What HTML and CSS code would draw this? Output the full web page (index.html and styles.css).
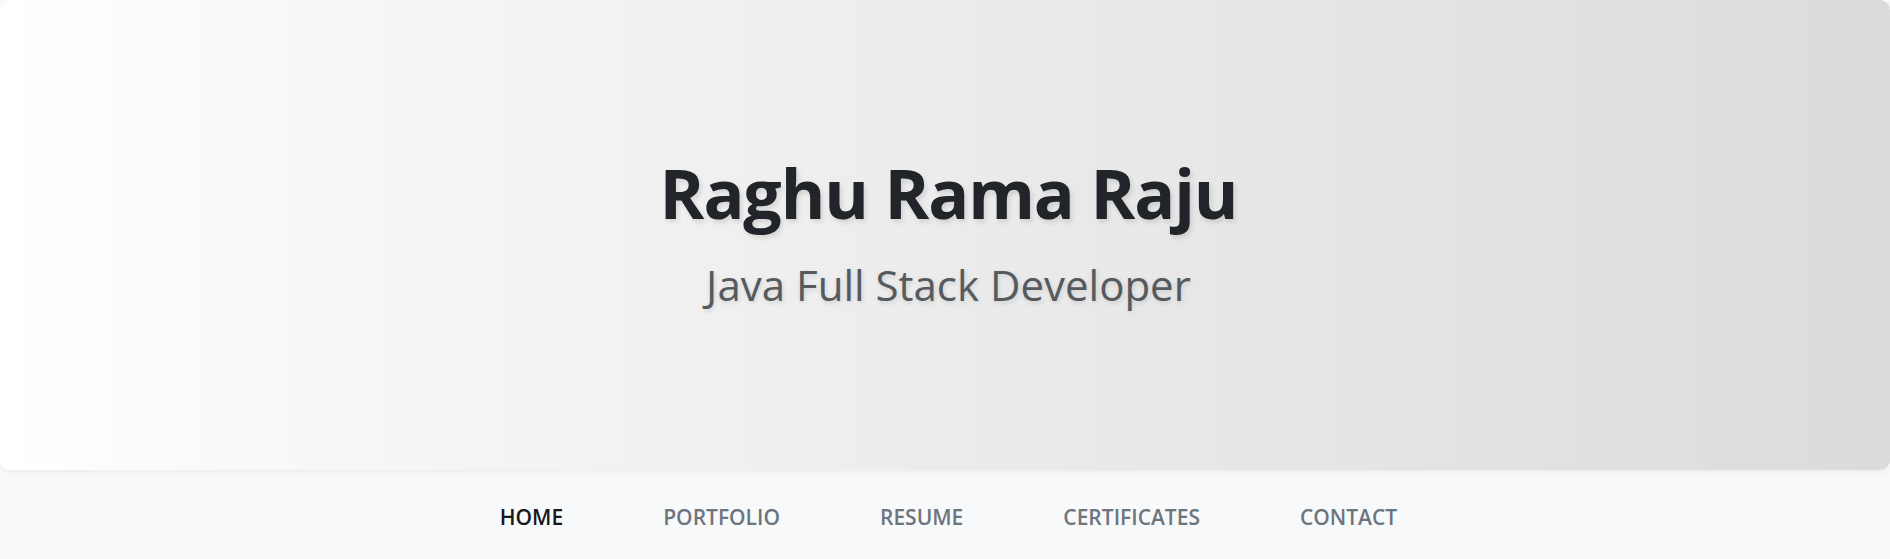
FILE: index.html
```html
<!DOCTYPE html>
<html lang="en">
<head>
<meta charset="utf-8">
<title>Raghu Rama Raju</title>
<link rel="stylesheet" href="styles.css">
</head>
<body>
  <header class="hero">
    <div class="hero-inner">
      <h1 class="hero-title">Raghu Rama Raju</h1>
      <p class="hero-subtitle">Java Full Stack Developer</p>
    </div>
  </header>
  <nav class="main-nav">
    <ul class="nav-list">
      <li><a class="nav-link active" href="#">HOME</a></li>
      <li><a class="nav-link" href="#">PORTFOLIO</a></li>
      <li><a class="nav-link" href="#">RESUME</a></li>
      <li><a class="nav-link" href="#">CERTIFICATES</a></li>
      <li><a class="nav-link" href="#">CONTACT</a></li>
    </ul>
  </nav>
</body>
</html>
```
FILE: styles.css
```css
* { box-sizing: border-box; }
html, body { margin: 0; padding: 0; }
body {
  background: #f8f9fa;
  font-family: "Open Sans", "Noto Sans", "Liberation Sans", sans-serif;
  overflow: hidden;
}
.hero {
  height: 470px;
  padding-left: 7px;
  background: linear-gradient(to right, #ffffff 0%, #f6f6f6 20%, #dbdbdb 100%);
  border-radius: 10px;
  box-shadow: 0 2px 6px rgba(0,0,0,0.06);
  display: flex;
  align-items: center;
  justify-content: center;
  position: relative;
  z-index: 1;
}
.hero-inner {
  text-align: center;
  padding-bottom: 8px;
}
.hero-title {
  margin: 0;
  font-size: 68px;
  font-weight: 700;
  line-height: 1.2;
  color: #212529;
  letter-spacing: -1.1px;
  text-shadow: 2px 3px 5px rgba(0,0,0,0.12);
}
.hero-subtitle {
  margin: 27px 0 0;
  font-size: 42px;
  font-weight: 400;
  line-height: 1.2;
  color: #555a5f;
  letter-spacing: 0;
  text-shadow: 1px 2px 5px rgba(0,0,0,0.13);
}
.main-nav {
  background: #f8f9fa;
  border-radius: 10px 10px 0 0;
  height: 100px;
  padding-left: 7px;
}
.nav-list {
  list-style: none;
  margin: 0;
  padding: 0;
  display: flex;
  justify-content: center;
  gap: 100px;
  padding-top: 33px;
}
.nav-link {
  text-decoration: none;
  font-size: 21px;
  line-height: 28px;
  color: #6c757d;
  font-weight: 600;
  letter-spacing: 0;
}
.nav-link.active { color: #16181b; }
```
